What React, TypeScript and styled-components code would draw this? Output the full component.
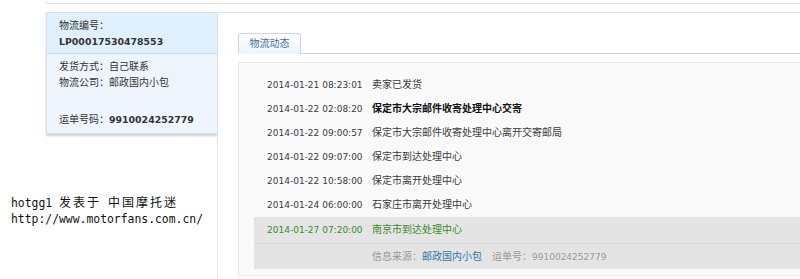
import styled, { createGlobalStyle } from "styled-components";

const GlobalStyle = createGlobalStyle`
  html, body {
    margin: 0;
    padding: 0;
    background: #fff;
  }
  body {
    font-family: "DejaVu Sans", "Noto Sans CJK SC", sans-serif;
  }
`;

const Page = styled.div`
  position: relative;
  width: 800px;
  height: 279px;
  overflow: hidden;
  background: #fff;
`;

const TopBox = styled.div`
  margin-left: 46px;
  height: 3px;
  border-left: 1px solid #e4e4e4;
  border-bottom: 1px solid #e4e4e4;
`;

const Layout = styled.div`
  display: flex;
  margin: 8px 0 0 46px;
  height: 267px;
`;

const Side = styled.div`
  width: 171px;
  flex-shrink: 0;
`;

const Card = styled.div`
  background: #eef5fd;
  border: 1px solid #d4e1ec;
  border-right: none;
  box-shadow: 0 2px 2px rgba(0, 0, 0, 0.18);
`;

const CardHead = styled.div`
  height: 41px;
  padding: 5px 0 0 12px;
  box-sizing: border-box;
  background: #e0f0fc;
  border-bottom: 1px solid #c8dcee;
`;

const CardBody = styled.div`
  height: 79px;
  padding: 5px 0 0 12px;
  box-sizing: border-box;
`;

const Line = styled.div<{ $gap?: number }>`
  height: 16px;
  line-height: 16px;
  margin-top: ${(p) => p.$gap ?? 0}px;
  font-size: 10px;
  color: #333;
  white-space: nowrap;
`;

const Bold = styled.span`
  font-family: "DejaVu Sans", sans-serif;
  font-weight: bold;
  font-size: 9.4px;
  color: #333;
`;

const Main = styled.div`
  width: 620px;
  flex-shrink: 0;
  border-left: 1px solid #dbe4ed;
  border-top: 1px solid #dbe3eb;
  padding: 20px 0 0 20px;
  box-sizing: border-box;
`;

const TabBar = styled.div`
  display: flex;
  border-bottom: 1px solid #c8d7e3;
`;

const Tab = styled.div`
  width: 61px;
  height: 19px;
  line-height: 19px;
  margin-bottom: -1px;
  text-align: center;
  font-size: 10px;
  color: #3f7395;
  border: 1px solid #c8d7e3;
  border-bottom-color: #f2f7fb;
  border-radius: 3px 3px 0 0;
  background: linear-gradient(#ffffff, #eef5fa);
`;

const Panel = styled.div`
  margin-top: 8px;
  height: 214px;
  box-sizing: border-box;
  padding: 10px 0 0 15px;
  background: #fafafa;
  border: 1px solid #ececec;
`;

const Row = styled.div<{ $tone?: "normal" | "strong" | "current" }>`
  display: grid;
  grid-template-columns: 105px 1fr;
  height: 24px;
  line-height: 24px;
  padding-left: 13px;
  white-space: nowrap;
  color: ${(p) => (p.$tone === "current" ? "#3d8a2c" : "#3a3a3a")};
`;

const Time = styled.span`
  font-family: "DejaVu Sans", sans-serif;
  font-size: 9px;
`;

const Desc = styled.span<{ $strong?: boolean }>`
  font-size: 10px;
  color: ${(p) => (p.$strong ? "#111" : "inherit")};
  font-weight: ${(p) => (p.$strong ? 600 : 400)};
`;

const Current = styled.div`
  background: #e4e4e4;
  padding-top: 0;
`;

const CurrentRow = styled(Row)`
  height: 26px;
  line-height: 26px;
`;

const Source = styled.div`
  display: grid;
  grid-template-columns: 105px 1fr;
  height: 26px;
  line-height: 25px;
  padding-left: 13px;
  border-top: 1px solid #d6d6d6;
  box-sizing: border-box;
  font-size: 10px;
  color: #999;
  white-space: nowrap;
`;

const Link = styled.span`
  color: #2f77a8;
`;

const Num = styled.span`
  font-family: "DejaVu Sans", sans-serif;
  font-size: 9px;
`;

const Stamp = styled.div`
  position: absolute;
  left: 11px;
  top: 195px;
  font-family: "DejaVu Sans Mono", "Noto Sans CJK SC", monospace;
  font-size: 11.4px;
  line-height: 16px;
  color: #111;
  white-space: nowrap;
`;

const StampCn = styled.span`
  font-size: 12px;
  letter-spacing: 2px;
`;

type Track = { time: string; text: string; strong?: boolean };

const tracks: Track[] = [
  { time: "2014-01-21 08:23:01", text: "卖家已发货" },
  { time: "2014-01-22 02:08:20", text: "保定市大宗邮件收寄处理中心交寄", strong: true },
  { time: "2014-01-22 09:00:57", text: "保定市大宗邮件收寄处理中心离开交寄邮局" },
  { time: "2014-01-22 09:07:00", text: "保定市到达处理中心" },
  { time: "2014-01-22 10:58:00", text: "保定市离开处理中心" },
  { time: "2014-01-24 06:00:00", text: "石家庄市离开处理中心" },
];

export default function App() {
  return (
    <Page>
      <GlobalStyle />
      <TopBox />
      <Layout>
        <Side>
          <Card>
            <CardHead>
              <Line>物流编号：</Line>
              <Line>
                <Bold>LP00017530478553</Bold>
              </Line>
            </CardHead>
            <CardBody>
              <Line>发货方式：自己联系</Line>
              <Line>物流公司：邮政国内小包</Line>
              <Line $gap={21}>
                运单号码：<Bold>9910024252779</Bold>
              </Line>
            </CardBody>
          </Card>
        </Side>
        <Main>
          <TabBar>
            <Tab>物流动态</Tab>
          </TabBar>
          <Panel>
            {tracks.map((t) => (
              <Row key={t.time} $tone={t.strong ? "strong" : "normal"}>
                <Time>{t.time}</Time>
                <Desc $strong={t.strong}>{t.text}</Desc>
              </Row>
            ))}
            <Current>
              <CurrentRow $tone="current">
                <Time>2014-01-27 07:20:00</Time>
                <Desc>南京市到达处理中心</Desc>
              </CurrentRow>
              <Source>
                <span />
                <span>
                  信息来源：<Link>邮政国内小包</Link>
                  {"　"}运单号：<Num>9910024252779</Num>
                </span>
              </Source>
            </Current>
          </Panel>
        </Main>
      </Layout>
      <Stamp>
        <div>
          hotgg1 <StampCn>发表于</StampCn> <StampCn>中国摩托迷</StampCn>
        </div>
        <div>http://www.motorfans.com.cn/</div>
      </Stamp>
    </Page>
  );
}
